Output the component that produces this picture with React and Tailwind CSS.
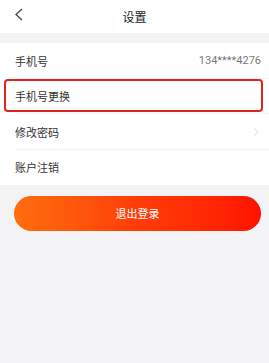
import { ChevronRight } from 'lucide-react';

const font = { fontFamily: '"Noto Sans CJK SC", "Noto Sans", sans-serif' };

const Row = ({ label, right, border = true, className = '' }) => (
    <div className={`relative flex items-center justify-between pl-[15px] pr-[8px] bg-white ${className}`}>
        <span className="text-[11px] text-[#333]">{label}</span>
        {right}
        {border && <div className="absolute bottom-0 left-[15px] right-0 h-px bg-[#f2f2f2]"></div>}
    </div>
);

const App = () => {
    return (
        <div className="w-[269px] h-[363px] bg-[#f3f3f5] flex flex-col" style={font}>
            {/* Header */}
            <header className="relative h-[33px] bg-white flex items-center justify-center">
                <svg className="absolute left-[14px] top-[8px]" width="10" height="13" viewBox="0 0 10 13">
                    <path d="M8 1 L2 6.5 L8 12" fill="none" stroke="#444" strokeWidth="1.3" />
                </svg>
                <span className="text-[12px] text-[#222]">设置</span>
            </header>

            <div className="h-[10px]"></div>

            <div className="relative bg-white">
                <Row label="手机号" className="h-[36px]" right={<span className="text-[11px] text-[#777]" style={{ fontFamily: 'Roboto, "Noto Sans", sans-serif' }}>134****4276</span>} />
                <Row label="手机号更换" className="h-[35px]" />
                <Row label="修改密码" className="h-[36px]" right={<ChevronRight size={14} strokeWidth={1.2} className="text-[#c4c4c4] -mr-[2px]" />} />
                <Row label="账户注销" border={false} className="h-[35px]" />

                {/* highlight annotation */}
                <div className="absolute left-[4px] top-[36px] w-[259px] h-[33px] border-2 border-[#e1231f] rounded-[4px]"></div>
            </div>

            <div className="pl-[14px] pr-[8px] pt-[11px]">
                <button className="w-full h-[35px] rounded-full bg-gradient-to-r from-[#ff6c0e] via-[#ff3c08] to-[#ff1000] text-white text-[11px]">
                    退出登录
                </button>
            </div>
        </div>
    );
};

export default App;
